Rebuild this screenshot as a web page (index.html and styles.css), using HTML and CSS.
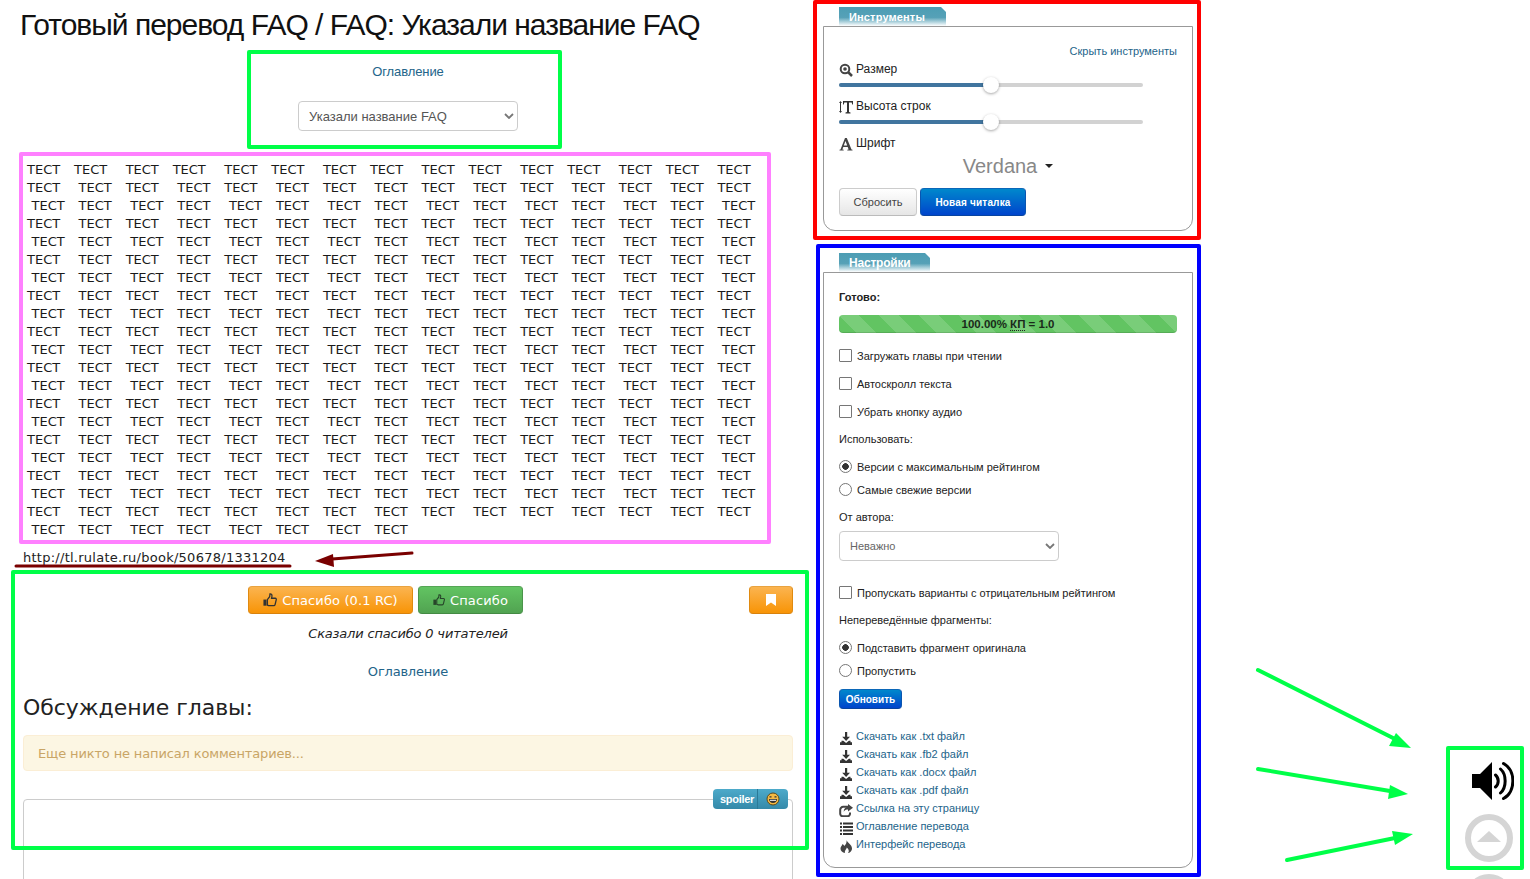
FILE: index.html
```html
<!DOCTYPE html>
<html lang="ru">
<head>
<meta charset="utf-8">
<title>Готовый перевод FAQ</title>
<link rel="stylesheet" href="styles.css">
</head>
<body>
<div class="page">
  <main class="main">
    <h1 class="title">Готовый перевод FAQ / FAQ: Указали название FAQ</h1>
    <div class="toc">
      <a class="toc-link" href="#">Оглавление</a>
      <select class="toc-select"><option>Указали название FAQ</option></select>
    </div>
<pre class="text">ТЕСТ   ТЕСТ    ТЕСТ   ТЕСТ    ТЕСТ   ТЕСТ    ТЕСТ   ТЕСТ    ТЕСТ   ТЕСТ    ТЕСТ   ТЕСТ    ТЕСТ   ТЕСТ    ТЕСТ
ТЕСТ    ТЕСТ   ТЕСТ    ТЕСТ   ТЕСТ    ТЕСТ   ТЕСТ    ТЕСТ   ТЕСТ    ТЕСТ   ТЕСТ    ТЕСТ   ТЕСТ    ТЕСТ   ТЕСТ
 ТЕСТ   ТЕСТ    ТЕСТ   ТЕСТ    ТЕСТ   ТЕСТ    ТЕСТ   ТЕСТ    ТЕСТ   ТЕСТ    ТЕСТ   ТЕСТ    ТЕСТ   ТЕСТ    ТЕСТ
ТЕСТ    ТЕСТ   ТЕСТ    ТЕСТ   ТЕСТ    ТЕСТ   ТЕСТ    ТЕСТ   ТЕСТ    ТЕСТ   ТЕСТ    ТЕСТ   ТЕСТ    ТЕСТ   ТЕСТ
 ТЕСТ   ТЕСТ    ТЕСТ   ТЕСТ    ТЕСТ   ТЕСТ    ТЕСТ   ТЕСТ    ТЕСТ   ТЕСТ    ТЕСТ   ТЕСТ    ТЕСТ   ТЕСТ    ТЕСТ
ТЕСТ    ТЕСТ   ТЕСТ    ТЕСТ   ТЕСТ    ТЕСТ   ТЕСТ    ТЕСТ   ТЕСТ    ТЕСТ   ТЕСТ    ТЕСТ   ТЕСТ    ТЕСТ   ТЕСТ
 ТЕСТ   ТЕСТ    ТЕСТ   ТЕСТ    ТЕСТ   ТЕСТ    ТЕСТ   ТЕСТ    ТЕСТ   ТЕСТ    ТЕСТ   ТЕСТ    ТЕСТ   ТЕСТ    ТЕСТ
ТЕСТ    ТЕСТ   ТЕСТ    ТЕСТ   ТЕСТ    ТЕСТ   ТЕСТ    ТЕСТ   ТЕСТ    ТЕСТ   ТЕСТ    ТЕСТ   ТЕСТ    ТЕСТ   ТЕСТ
 ТЕСТ   ТЕСТ    ТЕСТ   ТЕСТ    ТЕСТ   ТЕСТ    ТЕСТ   ТЕСТ    ТЕСТ   ТЕСТ    ТЕСТ   ТЕСТ    ТЕСТ   ТЕСТ    ТЕСТ
ТЕСТ    ТЕСТ   ТЕСТ    ТЕСТ   ТЕСТ    ТЕСТ   ТЕСТ    ТЕСТ   ТЕСТ    ТЕСТ   ТЕСТ    ТЕСТ   ТЕСТ    ТЕСТ   ТЕСТ
 ТЕСТ   ТЕСТ    ТЕСТ   ТЕСТ    ТЕСТ   ТЕСТ    ТЕСТ   ТЕСТ    ТЕСТ   ТЕСТ    ТЕСТ   ТЕСТ    ТЕСТ   ТЕСТ    ТЕСТ
ТЕСТ    ТЕСТ   ТЕСТ    ТЕСТ   ТЕСТ    ТЕСТ   ТЕСТ    ТЕСТ   ТЕСТ    ТЕСТ   ТЕСТ    ТЕСТ   ТЕСТ    ТЕСТ   ТЕСТ
 ТЕСТ   ТЕСТ    ТЕСТ   ТЕСТ    ТЕСТ   ТЕСТ    ТЕСТ   ТЕСТ    ТЕСТ   ТЕСТ    ТЕСТ   ТЕСТ    ТЕСТ   ТЕСТ    ТЕСТ
ТЕСТ    ТЕСТ   ТЕСТ    ТЕСТ   ТЕСТ    ТЕСТ   ТЕСТ    ТЕСТ   ТЕСТ    ТЕСТ   ТЕСТ    ТЕСТ   ТЕСТ    ТЕСТ   ТЕСТ
 ТЕСТ   ТЕСТ    ТЕСТ   ТЕСТ    ТЕСТ   ТЕСТ    ТЕСТ   ТЕСТ    ТЕСТ   ТЕСТ    ТЕСТ   ТЕСТ    ТЕСТ   ТЕСТ    ТЕСТ
ТЕСТ    ТЕСТ   ТЕСТ    ТЕСТ   ТЕСТ    ТЕСТ   ТЕСТ    ТЕСТ   ТЕСТ    ТЕСТ   ТЕСТ    ТЕСТ   ТЕСТ    ТЕСТ   ТЕСТ
 ТЕСТ   ТЕСТ    ТЕСТ   ТЕСТ    ТЕСТ   ТЕСТ    ТЕСТ   ТЕСТ    ТЕСТ   ТЕСТ    ТЕСТ   ТЕСТ    ТЕСТ   ТЕСТ    ТЕСТ
ТЕСТ    ТЕСТ   ТЕСТ    ТЕСТ   ТЕСТ    ТЕСТ   ТЕСТ    ТЕСТ   ТЕСТ    ТЕСТ   ТЕСТ    ТЕСТ   ТЕСТ    ТЕСТ   ТЕСТ
 ТЕСТ   ТЕСТ    ТЕСТ   ТЕСТ    ТЕСТ   ТЕСТ    ТЕСТ   ТЕСТ    ТЕСТ   ТЕСТ    ТЕСТ   ТЕСТ    ТЕСТ   ТЕСТ    ТЕСТ
ТЕСТ    ТЕСТ   ТЕСТ    ТЕСТ   ТЕСТ    ТЕСТ   ТЕСТ    ТЕСТ   ТЕСТ    ТЕСТ   ТЕСТ    ТЕСТ   ТЕСТ    ТЕСТ   ТЕСТ
 ТЕСТ   ТЕСТ    ТЕСТ   ТЕСТ    ТЕСТ   ТЕСТ    ТЕСТ   ТЕСТ</pre>
    <div class="url">http://tl.rulate.ru/book/50678/1331204</div>
    <div class="thanks">
      <div class="thanks-group">
        <button class="btn btn-orange"><svg class="thumb" viewBox="0 0 16 16"><path d="M5 7.500l2.600-3.200.4-3.300c1.600-.2 2.400 1 2.200 2.600L9.800 6H14c1 0 1.400.9 1.100 1.800l-1.300 5.500c-.2.8-.8 1.200-1.500 1.200H7c-.9 0-1.300-.5-2-.7z" fill="none" stroke="#333" stroke-width="1.500"/><path d="M.5 7.500h3.500v7H.5z" fill="#333"/></svg>Спасибо (0.1 RC)</button>
        <button class="btn btn-green"><svg class="thumb" viewBox="0 0 16 16"><path d="M5 7.500l2.600-3.200.4-3.300c1.600-.2 2.400 1 2.200 2.600L9.800 6H14c1 0 1.400.9 1.100 1.800l-1.300 5.500c-.2.8-.8 1.200-1.500 1.200H7c-.9 0-1.300-.5-2-.7z" fill="none" stroke="#27452a" stroke-width="1.500"/><path d="M.5 7.500h3.500v7H.5z" fill="#27452a"/></svg>Спасибо</button>
      </div>
      <button class="btn btn-orange btn-bookmark"><svg class="bookmark" viewBox="0 0 10 12"><path d="M0 0h10v12L5 8.500 0 12z" fill="#fff"/></svg></button>
    </div>
    <p class="said">Сказали спасибо 0 читателей</p>
    <a class="back-link" href="#">Оглавление</a>
    <h2 class="discussion">Обсуждение главы:</h2>
    <div class="alert">Еще никто не написал комментариев...</div>
    <div class="editor">
      <div class="spoiler">
        <span class="spoiler-text">spoiler</span>
        <span class="spoiler-smile"><svg viewBox="0 0 14 14" class="smile"><circle cx="7" cy="7" r="6" fill="#f5b942" stroke="#5c4a1a"/><path d="M3.500 4.800h2M8.500 4.800h2" stroke="#333" stroke-width="1.200"/><path d="M3 7h8c0 2.500-1.800 4-4 4s-4-1.500-4-4z" fill="#333"/><path d="M4 7.800h6v1H4z" fill="#fff"/></svg></span>
      </div>
    </div>
  </main>

  <aside class="side">
    <section class="block">
      <div class="tab tab-tools">Инструменты</div>
      <div class="panel">
        <a class="hide-link" href="#">Скрыть инструменты</a>
        <div class="tool-label"><svg class="ico" viewBox="0 0 14 14"><circle cx="6" cy="6" r="4.300" fill="none" stroke="#444" stroke-width="2"/><circle cx="6" cy="6" r="1.800" fill="#444"/><path d="M9 9l4 4" stroke="#444" stroke-width="2.500"/></svg>Размер</div>
        <div class="slider"><div class="slider-fill"></div><div class="slider-thumb"></div></div>
        <div class="tool-label tool-gap"><svg class="ico" viewBox="0 0 14 14"><path d="M1.500 2v10" stroke="#333"/><path d="M0 3l1.500-2 1.500 2zM0 11l1.500 2 1.500-2z" fill="#333"/><path d="M4 1h10v3.500h-.8l-.5-2H10V12l1.500.6v.9H6.500v-.9L8 12V2.500H5.300l-.5 2H4z" fill="#333"/></svg>Высота строк</div>
        <div class="slider"><div class="slider-fill"></div><div class="slider-thumb"></div></div>
        <div class="tool-label tool-gap"><svg class="ico" viewBox="0 0 14 14"><path d="M.5 12.700l1-.3L6 1h1.800l4.700 11.400 1 .3v.8H8.300v-.8l1.300-.3-.9-2.500H4.300l-.9 2.500 1.300.3v.8H.5zM4.800 8.400h3.400L6.500 4z" fill="#444"/></svg>Шрифт</div>
        <div class="font-pick">Verdana<span class="caret"></span></div>
        <div class="tool-buttons">
          <button class="sbtn sbtn-default">Сбросить</button>
          <button class="sbtn sbtn-primary sbtn-reader">Новая читалка</button>
        </div>
      </div>
    </section>

    <section class="block block-settings">
      <div class="tab tab-settings">Настройки</div>
      <div class="panel">
        <div class="ready">Готово:</div>
        <div class="progress"><span>100.00% <abbr class="kp">КП</abbr> = 1.0</span></div>
        <label class="opt gap-14"><input type="checkbox">Загружать главы при чтении</label>
        <label class="opt gap-10"><input type="checkbox">Автоскролл текста</label>
        <label class="opt gap-10"><input type="checkbox">Убрать кнопку аудио</label>
        <div class="cap gap-9">Использовать:</div>
        <label class="opt gap-10"><input type="radio" name="use" checked>Версии с максимальным рейтингом</label>
        <label class="opt gap-5"><input type="radio" name="use">Самые свежие версии</label>
        <div class="cap gap-9">От автора:</div>
        <select class="author-select"><option>Неважно</option></select>
        <label class="opt gap-23"><input type="checkbox">Пропускать варианты с отрицательным рейтингом</label>
        <div class="cap gap-9">Непереведённые фрагменты:</div>
        <label class="opt gap-10"><input type="radio" name="frag" checked>Подставить фрагмент оригинала</label>
        <label class="opt gap-5"><input type="radio" name="frag">Пропустить</label>
        <button class="sbtn sbtn-primary sbtn-update">Обновить</button>
        <ul class="links">
          <li><svg class="ico" viewBox="0 0 14 14"><path d="M6 1h2.200v4.800H11L7.100 10 3.200 5.800H6zM2.500 9.800h1.800L7.100 12l2.800-2.200h1.600v1.400H13V14H1v-2.800h1.500z" fill="#333"/></svg><a href="#">Скачать как .txt файл</a></li>
          <li><svg class="ico" viewBox="0 0 14 14"><path d="M6 1h2.200v4.800H11L7.100 10 3.200 5.800H6zM2.500 9.800h1.800L7.100 12l2.800-2.200h1.600v1.400H13V14H1v-2.800h1.500z" fill="#333"/></svg><a href="#">Скачать как .fb2 файл</a></li>
          <li><svg class="ico" viewBox="0 0 14 14"><path d="M6 1h2.200v4.800H11L7.100 10 3.200 5.800H6zM2.500 9.800h1.800L7.100 12l2.800-2.200h1.600v1.400H13V14H1v-2.800h1.500z" fill="#333"/></svg><a href="#">Скачать как .docx файл</a></li>
          <li><svg class="ico" viewBox="0 0 14 14"><path d="M6 1h2.200v4.800H11L7.100 10 3.200 5.800H6zM2.500 9.800h1.800L7.100 12l2.800-2.200h1.600v1.400H13V14H1v-2.800h1.500z" fill="#333"/></svg><a href="#">Скачать как .pdf файл</a></li>
          <li><svg class="ico" viewBox="0 0 14 14"><path d="M9 3.800H4.200A3 3 0 0 0 1.200 6.800v4A2.400 2.400 0 0 0 3.600 13.200h5a2.400 2.400 0 0 0 2.400-2.400V9.500" fill="none" stroke="#444" stroke-width="2"/><path d="M9 1l5 3.700-5 3.800V6.400c-2 0-3.400.6-4.300 2.300 0-3 1.800-4.700 4.300-4.900z" fill="#444"/></svg><a href="#">Ссылка на эту страницу</a></li>
          <li><svg class="ico" viewBox="0 0 14 14"><path d="M1 1.500h2v2H1zM4 1.500h10v2H4zM1 5h2v2H1zM4 5h10v2H4zM1 8.500h2v2H1zM4 8.500h10v2H4zM1 12h2v2H1zM4 12h10v2H4z" fill="#333"/></svg><a href="#">Оглавление перевода</a></li>
          <li><svg class="ico" viewBox="0 0 14 14"><path d="M7.500 1c.5 2.500 5.500 4.500 5.500 8.500 0 2.500-2.300 4.500-4 4.500 1.200-1.200 1.200-3.500-1.300-5.500 0 2-2.300 2.500-1.700 5.500C3.500 13.500 1.500 12 1.500 9.800 1.500 7.500 3 7 3.500 5c1 .5 1.500 1.500 1.800 2C6.800 5.500 8 3.500 7.500 1z" fill="#444"/></svg><a href="#">Интерфейс перевода</a></li>
        </ul>
      </div>
    </section>
  </aside>
</div>

<div class="float-tools">
  <svg class="speaker" viewBox="0 0 42 40"><path d="M0 13h8L20 1v38L8 27H0z" fill="#000"/><path d="M23.500 14c3.600 3 3.600 9 0 12M28.500 8c6.200 5.500 6.200 18.500 0 24M31.500 2.500c12.500 6.500 12.500 28.500 0 35" fill="none" stroke="#000" stroke-width="3" stroke-linecap="round"/></svg>
  <div class="up-btn"><span class="up-arrow"></span></div>
  <div class="up-btn up-btn-next"></div>
</div>

<svg class="marks" viewBox="0 0 1530 879" aria-hidden="true">
  <g fill="none" stroke-width="4" stroke-linejoin="round">
    <rect class="m-green" x="249" y="52" width="311" height="95"/>
    <rect class="m-pink" x="21" y="154" width="748" height="388"/>
    <rect class="m-red" x="815" y="2" width="384" height="236"/>
    <rect class="m-blue" x="818" y="246" width="381" height="629"/>
    <rect class="m-green" x="13" y="572" width="794" height="276"/>
    <rect class="m-green" x="1448" y="748" width="74" height="120"/>
  </g>
  <g class="m-arrows-green">
    <path d="M1258 670L1395 739" /><path d="M1411 748l-22-2 7-13z" class="head"/>
    <path d="M1258 769L1390 791" /><path d="M1408 794l-20 5 2-14z" class="head"/>
    <path d="M1287 860L1395 838" /><path d="M1413 834l-18 11-3-14z" class="head"/>
  </g>
  <g class="m-arrows-red">
    <path d="M16 566H290"/>
    <path d="M412 553L332 559"/><path d="M315 561l18-7 1 13z" class="head"/>
  </g>
</svg>
</body>
</html>
```
FILE: styles.css
```css
* { box-sizing: border-box; }
html, body { margin: 0; height: 879px; overflow: hidden; background: #fff; }
body { font-family: "Liberation Sans", Arial, sans-serif; font-size: 12px; color: #222; }
a { color: #23648a; text-decoration: none; }

.page { display: flex; gap: 30px; padding-left: 23px; height: 879px; }
.main { width: 770px; flex: none; }
.side { width: 370px; flex: none; padding-top: 7px; }

.title { margin: 5px 0 0 -3px; font-size: 30px; line-height: 40px; font-weight: 400; letter-spacing: -1px; color: #111; white-space: nowrap; }
.toc { display: flex; flex-direction: column; align-items: center; margin-top: 17px; }
.toc-link { font-size: 13px; line-height: 18px; letter-spacing: -.1px; padding-top: 1px; height: 18px; }
.toc-select { width: 220px; height: 30px; margin-top: 21px; padding: 0 22px 0 10px; border: 1px solid #ccc; border-radius: 4px; font: 13px "Liberation Sans", Arial, sans-serif; color: #555; appearance: none; background: #fff url("data:image/svg+xml,%3Csvg xmlns='http://www.w3.org/2000/svg' width='10' height='6'%3E%3Cpath d='M1 1l4 4 4-4' fill='none' stroke='%23777' stroke-width='1.800'/%3E%3C/svg%3E") no-repeat right 3px center; }

.text { margin: 30px 0 0; padding-left: 4px; font: 13px/18px "DejaVu Sans", Verdana, sans-serif; word-spacing: .48px; color: #1a1a1a; }

.url { margin-top: 10px; font: 13px/18px "DejaVu Sans", Verdana, sans-serif; letter-spacing: .26px; color: #222; }
.thanks { display: flex; margin-top: 19px; }
.thanks-group { flex: 1; display: flex; justify-content: center; gap: 5px; padding-right: 1px; }
.btn { display: inline-flex; align-items: center; justify-content: center; height: 28px; padding: 0 14px; border: 1px solid; border-radius: 4px; font: 13px "DejaVu Sans", Verdana, sans-serif; letter-spacing: .12px; color: #fff; }
.btn-orange { background: linear-gradient(#fbb450, #f89406); border-color: #e9a33f #e08a10 #d8820c; }
.btn-green { background: linear-gradient(#62c462, #51a351); border-color: #55a655 #4a944a #438a43; }
.thanks-group .btn-orange { width: 165px; }
.thanks-group .btn-green { width: 105px; }
.btn-bookmark { width: 44px; padding: 0; }
.thumb { width: 14px; height: 14px; margin-right: 5px; }
.bookmark { width: 10px; height: 12px; }
.said { margin: 11px 0 0; font: italic 13px/18px "DejaVu Sans", Verdana, sans-serif; letter-spacing: -.18px; text-align: center; color: #222; }
.back-link { display: block; margin-top: 20px; font: 13px/18px "DejaVu Sans", Verdana, sans-serif; letter-spacing: -.2px; text-align: center; }
.discussion { margin: 10px 0 0; font: 400 22px/33px "DejaVu Sans", Verdana, sans-serif; letter-spacing: -.05px; color: #222; }
.alert { height: 36px; margin-top: 11px; padding-left: 14px; border: 1px solid #fbeed5; border-radius: 4px; background: #fcf6e3; font: 13px/36px "DejaVu Sans", Verdana, sans-serif; letter-spacing: -.14px; color: #c9a566; }
.editor { position: relative; height: 200px; margin-top: 28px; border: 1px solid #ccc; border-radius: 4px 4px 0 0; }
.spoiler { position: absolute; top: -11px; right: 4px; display: flex; width: 75px; height: 20px; border-radius: 4px; background: linear-gradient(#4daaca, #3489a9); color: #fff; font: 700 11px/20px "Liberation Sans", Arial, sans-serif; letter-spacing: -.3px; }
.spoiler-text { width: 45px; padding-left: 7px; border-right: 1px solid #2a7a98; }
.spoiler-smile { display: flex; align-items: center; justify-content: center; flex: 1; }
.smile { width: 14px; height: 14px; }

.block-settings { margin-top: 22px; }
.tab { height: 19px; padding-left: 10px; font: 700 11px/20px "Liberation Sans", Arial, sans-serif; color: #fff; background: linear-gradient(#4c9db4 0, #56a1b7 55%, #fff 100%); clip-path: polygon(0 0, calc(100% - 5px) 0, 100% 5px, 100% 100%, 0 100%); margin-left: 16px; }
.tab-tools { width: 107px; letter-spacing: .15px; }
.tab-settings { width: 91px; font-size: 12px; letter-spacing: -.2px; line-height: 21px; }
.panel { padding: 15px 15px 14px; border: 1px solid #999; border-radius: 0 0 12px 12px; }

.hide-link { display: block; text-align: right; font-size: 11px; line-height: 18px; }
.tool-label { display: flex; align-items: flex-start; font-size: 12px; line-height: 18px; color: #222; }
.tool-gap { margin-top: 10px; }
.ico { flex: none; width: 14px; height: 14px; margin: 3px 3px 0 0; }
.slider { position: relative; width: 304px; height: 4px; margin-top: 5px; border-radius: 2px; background: #d2d2d2; }
.slider-fill { width: 152px; height: 4px; border-radius: 2px 0 0 2px; background: #41759f; }
.slider-thumb { position: absolute; top: -6px; left: 144px; width: 16px; height: 16px; border-radius: 50%; background: #fff; box-shadow: 0 1px 3px rgba(0,0,0,.35); }
.font-pick { display: flex; justify-content: center; align-items: center; width: 304px; height: 28px; padding-left: 34px; font-size: 20px; color: #888; }
.caret { width: 0; height: 0; margin-left: 8px; border: 4px solid transparent; border-top-color: #222; border-bottom: 0; }
.tool-buttons { display: flex; gap: 3px; margin-top: 8px; }
.sbtn { display: inline-block; padding: 0; border: 1px solid; border-radius: 4px; font: 11px "Liberation Sans", Arial, sans-serif; height: 28px; }
.sbtn-default { width: 78px; background: linear-gradient(#fff, #e6e6e6); border-color: #ccc #ccc #bbb; color: #444; }
.sbtn-primary { width: 106px; background: linear-gradient(#0088cc, #0044cc); border-color: #0b67b8 #0a55b0 #0844a0; color: #fff; font-size: 10px; font-weight: 700; }
.sbtn-reader { letter-spacing: .18px; }
.sbtn-update { display: block; width: 63px; height: 20px; margin-top: 9px; }

.ready { font-weight: 700; font-size: 11px; line-height: 18px; }
.progress { height: 18px; margin-top: 9px; border-radius: 4px; background-color: #62c462; background-image: linear-gradient(45deg, rgba(255,255,255,.15) 25%, transparent 25%, transparent 50%, rgba(255,255,255,.15) 50%, rgba(255,255,255,.15) 75%, transparent 75%, transparent); background-size: 40px 40px; box-shadow: inset 0 -1px 0 rgba(0,0,0,.12); font: 700 11.500px/18px "Liberation Sans", Arial, sans-serif; text-align: center; color: #1b2a1b; }
.kp { border-bottom: 1px dotted #222; }
.opt { display: flex; align-items: center; height: 18px; font-size: 11px; color: #222; white-space: nowrap; }
.opt input { flex: none; width: 13px; height: 13px; margin: -2px 5px 0 0; appearance: none; border: 1px solid #767676; background: #fff; }
.opt input[type="checkbox"] { border-radius: 1px; }
.opt input[type="radio"] { border-radius: 50%; }
.opt input[type="radio"]:checked { background: radial-gradient(circle, #333 0 3px, #fff 3.600px); }
.cap { font-size: 11px; line-height: 18px; color: #222; }
.gap-5 { margin-top: 5px; }
.gap-9 { margin-top: 9px; }
.gap-10 { margin-top: 10px; }
.gap-14 { margin-top: 14px; }
.gap-23 { margin-top: 23px; }
.author-select { display: block; width: 220px; height: 30px; margin-top: 5px; padding: 0 22px 0 10px; border: 1px solid #ccc; border-radius: 4px; font: 11px "Liberation Sans", Arial, sans-serif; color: #666; appearance: none; background: #fff url("data:image/svg+xml,%3Csvg xmlns='http://www.w3.org/2000/svg' width='10' height='6'%3E%3Cpath d='M1 1l4 4 4-4' fill='none' stroke='%23777' stroke-width='1.800'/%3E%3C/svg%3E") no-repeat right 3px center; }
.links { margin: 18px 0 0; padding: 0; list-style: none; }
.links li { display: flex; height: 18px; font-size: 11px; line-height: 18px; }
.links .ico { margin-top: 4px; }

.float-tools { position: fixed; left: 1465px; top: 761px; width: 60px; display: flex; flex-direction: column; align-items: flex-start; }
.speaker { width: 42px; height: 40px; margin-left: 7px; }
.up-btn { display: flex; justify-content: center; align-items: center; flex: none; width: 48px; height: 48px; margin-top: 13px; border: 6px solid #d5d5d5; border-radius: 50%; }
.up-btn-next { margin-top: 12px; }
.up-arrow { width: 0; height: 0; margin-top: -3px; border: 12px solid transparent; border-bottom: 11px solid #d5d5d5; border-top: 0; }

.marks { position: fixed; left: 0; top: 0; width: 1530px; height: 879px; pointer-events: none; }
.m-green { stroke: #00ff48; }
.m-pink { stroke: #ff80ff; }
.m-red { stroke: #ff0000; }
.m-blue { stroke: #0000ff; }
.m-arrows-green path { stroke: #00ff48; stroke-width: 4; stroke-linecap: round; fill: none; }
.m-arrows-green .head { stroke: none; fill: #00ff48; }
.m-arrows-red path { stroke: #7a0000; stroke-width: 3; stroke-linecap: round; fill: none; }
.m-arrows-red .head { stroke: none; fill: #7a0000; }
```
